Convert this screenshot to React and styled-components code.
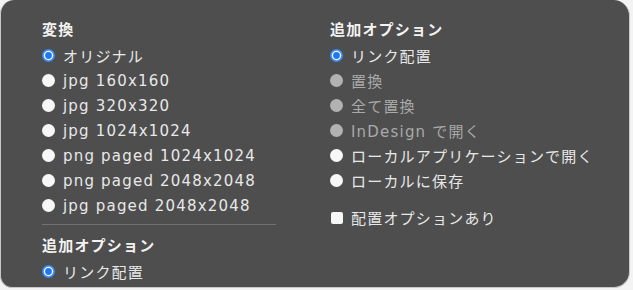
import React from 'react';
import styled, { createGlobalStyle } from 'styled-components';

const GlobalStyle = createGlobalStyle`
  html, body {
    margin: 0;
    padding: 0;
    background: #f3f3f3;
  }
  body {
    font-family: "DejaVu Sans", "Noto Sans CJK JP", sans-serif;
  }
`;

const Panel = styled.div`
  width: 630px;
  height: 288px;
  box-sizing: border-box;
  background: #4e4e4e;
  border: 1px solid #c8c8c8;
  border-top: none;
  border-radius: 14px 16px 16px 12px;
  overflow: hidden;
  display: grid;
  grid-template-columns: 234px 1fr;
  column-gap: 54px;
  padding: 16px 0 0 41px;
`;

const Column = styled.div`
  display: flex;
  flex-direction: column;
`;

const Heading = styled.div`
  font-family: "Noto Sans CJK JP", sans-serif;
  font-weight: 700;
  font-size: 15px;
  line-height: 25px;
  letter-spacing: 1.2px;
  color: #f2f2f2;
  margin-bottom: 2px;
  margin-top: ${p => p.$gap || 0}px;
`;

const Row = styled.label`
  display: flex;
  align-items: center;
  gap: 8px;
  height: 25px;
  font-size: 15px;
  letter-spacing: 1.2px;
  white-space: nowrap;
  color: ${p => (p.$disabled ? '#a9a9a9' : '#e8e8e8')};
  margin-top: ${p => p.$gap || 0}px;
`;

const Dot = styled.span`
  width: 13px;
  height: 13px;
  border-radius: 50%;
  flex: none;
  background: ${p => (p.$disabled ? '#b2b2b2' : '#f7f7f7')};
`;

const Box = styled.span`
  width: 12px;
  height: 12px;
  border-radius: 2px;
  flex: none;
  margin-left: 1px;
  background: #f7f7f7;
`;

const Divider = styled.div`
  height: 1px;
  background: #727272;
  margin: 6px 0 7px;
`;

const Selected = () => (
  <svg width="13" height="13" viewBox="0 0 13 13" style={{ flex: 'none' }}>
    <circle cx="6.5" cy="6.5" r="6.5" fill="#3b8cf6" />
    <circle cx="6.5" cy="6.5" r="4.7" fill="#ffffff" />
    <circle cx="6.5" cy="6.5" r="3.4" fill="#1f77f2" />
  </svg>
);

const Radio = ({ label, selected, disabled }) => (
  <Row $disabled={disabled}>
    {selected ? <Selected /> : <Dot $disabled={disabled} />}
    {label}
  </Row>
);

const formats = [
  'jpg 160x160',
  'jpg 320x320',
  'jpg 1024x1024',
  'png paged 1024x1024',
  'png paged 2048x2048',
  'jpg paged 2048x2048',
];

const OptionList = () => (
  <>
    <Heading>追加オプション</Heading>
    <Radio label="リンク配置" selected />
    <Radio label="置換" disabled />
    <Radio label="全て置換" disabled />
    <Radio label="InDesign で開く" disabled />
    <Radio label="ローカルアプリケーションで開く" />
    <Radio label="ローカルに保存" />
  </>
);

export default function App() {
  return (
    <>
      <GlobalStyle />
      <Panel>
        <Column>
          <Heading>変換</Heading>
          <Radio label="オリジナル" selected />
          {formats.map(f => (
            <Radio key={f} label={f} />
          ))}
          <Divider />
          <OptionList />
        </Column>
        <Column>
          <OptionList />
          <Row $gap={12}>
            <Box />
            <span style={{ fontFamily: '"Noto Sans CJK JP", sans-serif' }}>配置オプションあり</span>
          </Row>
        </Column>
      </Panel>
    </>
  );
}
